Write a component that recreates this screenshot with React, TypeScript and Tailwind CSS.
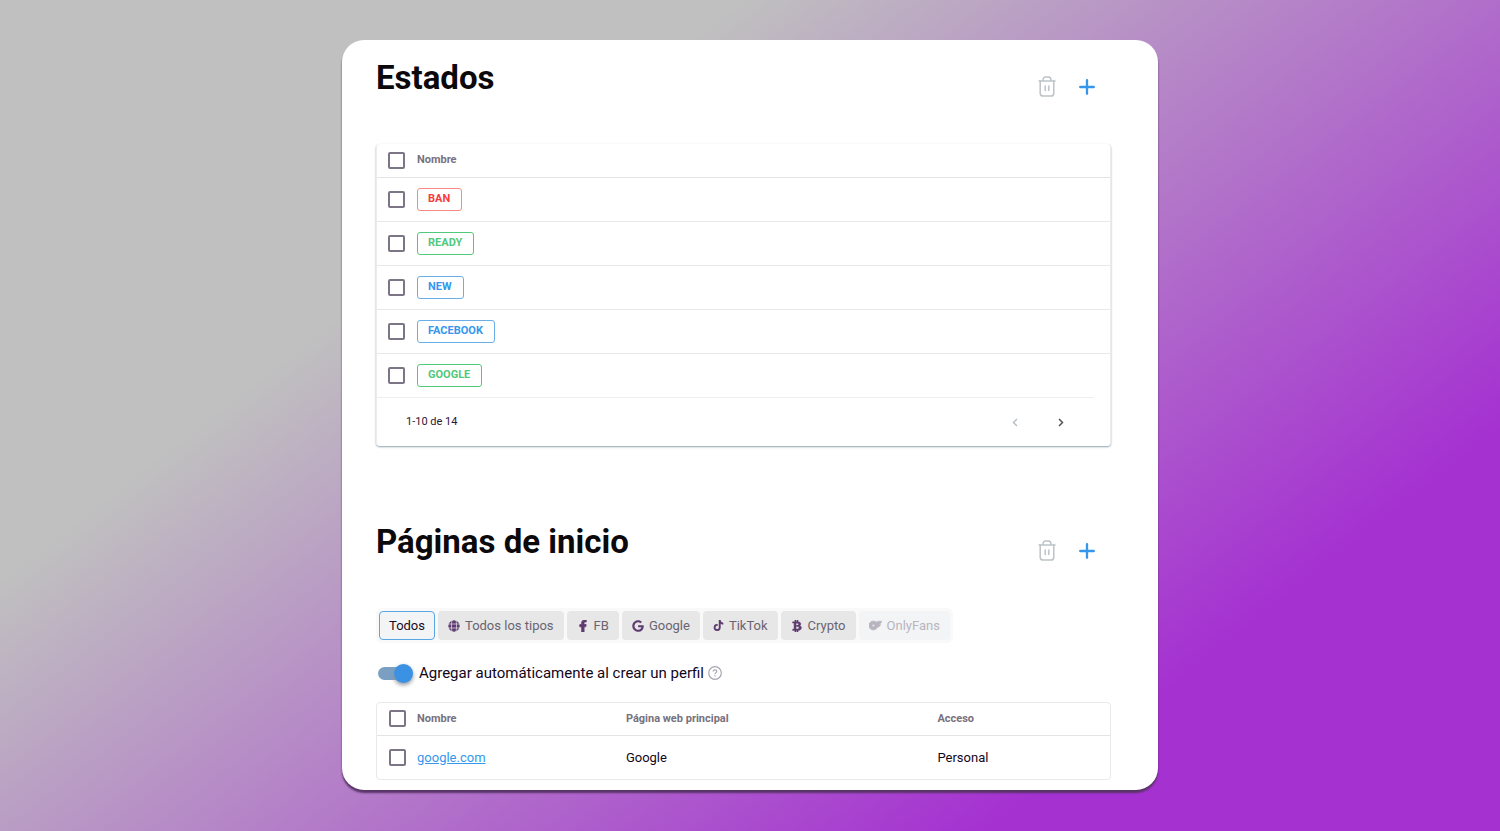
import { useState } from "react";
import type { ReactNode } from "react";
import { FaBtc, FaFacebookF, FaGoogle } from "react-icons/fa";
import { FaTiktok } from "react-icons/fa6";
import { SiOnlyfans } from "react-icons/si";

const statuses = [
  { name: "BAN", style: "border-[#f98a88] text-[#f83c3c]" },
  { name: "READY", style: "border-[#52c87a] text-[#52c87a]" },
  { name: "NEW", style: "border-[#6aaee8] text-[#3597ec]" },
  { name: "FACEBOOK", style: "border-[#6aaee8] text-[#3597ec]" },
  { name: "GOOGLE", style: "border-[#52c87a] text-[#52c87a]" },
];

const filters: { name: string; icon: ReactNode; disabled?: boolean }[] = [
  { name: "Todos", icon: null },
  { name: "Todos los tipos", icon: <GlobeIcon /> },
  { name: "FB", icon: <FaFacebookF size={12} stroke="currentColor" strokeWidth={36} /> },
  { name: "Google", icon: <FaGoogle size={12} /> },
  { name: "TikTok", icon: <FaTiktok size={11} /> },
  { name: "Crypto", icon: <FaBtc size={12} stroke="currentColor" strokeWidth={20} /> },
  { name: "OnlyFans", icon: <SiOnlyfans size={13} stroke="currentColor" strokeWidth={1} />, disabled: true },
];

function GlobeIcon() {
  return (
    <svg width="12" height="12" viewBox="0 0 12 12" fill="none" aria-hidden="true">
      <circle cx="6" cy="6" r="5.700" fill="currentColor" />
      <path d="M4 0C3.300 3 3.300 9 4 12M8 0C8.700 3 8.700 9 8 12M0 4h12M0 8h12" stroke="#e7e7e7" strokeWidth="0.7" />
    </svg>
  );
}

function TrashIcon() {
  return (
    <svg width="18" height="21" viewBox="0 0 18 21" fill="none" stroke="#bdc3c8" strokeWidth="1.500" strokeLinecap="round" aria-hidden="true">
      <path d="M1 5h16" />
      <path d="M5 4.500C5 2.200 6 1 7.600 1h2.800C12 1 13 2.200 13 4.500" />
      <path d="M2.200 5v12.200c0 1.900 1 2.900 2.900 2.900h7.800c1.900 0 2.900-1 2.900-2.900V5" />
      <path d="M7.200 10v4.500M10.800 10v4.500" />
    </svg>
  );
}

function PlusIcon() {
  return (
    <svg width="16" height="16" viewBox="0 0 16 16" fill="none" stroke="#3597ec" strokeWidth="2.300" strokeLinecap="round" aria-hidden="true">
      <path d="M8 1.200v13.600M1.200 8h13.600" />
    </svg>
  );
}

function Chevron({ next }: { next?: boolean }) {
  return (
    <svg width="6" height="9" viewBox="0 0 6 9" fill="none" stroke="currentColor" strokeWidth="1.500" aria-hidden="true">
      <path d={next ? "M1 1l3.500 3.500L1 8" : "M5 1L1.500 4.500 5 8"} />
    </svg>
  );
}

function HelpIcon() {
  return (
    <svg width="14" height="14" viewBox="0 0 14 14" fill="none" stroke="#aaa6b2" strokeWidth="1.200" aria-hidden="true">
      <circle cx="7" cy="7" r="6.300" />
      <path d="M5.200 5.600c0-1.100.8-1.800 1.800-1.800s1.800.7 1.800 1.600C8.800 6.600 7 6.700 7 8.200M7 9.300v1.200" />
    </svg>
  );
}

function Checkbox({ label }: { label: string }) {
  return (
    <input
      type="checkbox"
      aria-label={label}
      className="block size-[17px] appearance-none rounded-xs border-2 border-[#7c7585] bg-white checked:border-[#3597ec] checked:bg-[#3597ec]"
    />
  );
}

function SectionHeader({ title }: { title: string }) {
  return (
    <header className="flex items-start justify-between pr-4">
      <h1 className="text-[33px] leading-10 font-bold text-[#0b090c]">{title}</h1>
      <div className="flex items-center gap-[23px] pt-[18px]">
        <button type="button" aria-label="Eliminar">
          <TrashIcon />
        </button>
        <button type="button" aria-label="Agregar">
          <PlusIcon />
        </button>
      </div>
    </header>
  );
}

export default function App() {
  const [active, setActive] = useState("Todos");

  return (
    <div className="min-h-screen bg-[linear-gradient(142deg,#c0c0c0_29%,#a531d1_80%)] px-4 py-10 font-['Roboto','Liberation_Sans',sans-serif]">
      <main className="mx-auto w-full max-w-[816px] rounded-[22px] bg-white pt-[18px] pr-[47px] pb-[10px] pl-[34px] shadow-[0_3px_2px_#593468]">
        <section>
          <SectionHeader title="Estados" />
          <div className="mt-[46px] rounded border-x border-[#ececec] shadow-[0_1px_2px_#94a3ab]">
            <table className="w-full text-left">
              <thead>
                <tr className="h-[33px] border-b border-[#e4e4e6]">
                  <th className="w-10 pl-[11px]">
                    <Checkbox label="Seleccionar todos los estados" />
                  </th>
                  <th className="text-[11px] font-bold text-[#77717d]">Nombre</th>
                </tr>
              </thead>
              <tbody>
                {statuses.map((status) => (
                  <tr key={status.name} className="h-11 border-b border-[#e8e8ea] last:border-0">
                    <td className="pl-[11px]">
                      <Checkbox label={`Seleccionar ${status.name}`} />
                    </td>
                    <td>
                      <span className={`flex h-[23px] w-fit items-center rounded-[3px] border pr-[11px] pl-[10px] text-[11px] font-bold ${status.style}`}>
                        {status.name}
                      </span>
                    </td>
                  </tr>
                ))}
              </tbody>
            </table>
            <footer className="mr-4 flex h-[49px] items-center justify-between border-t border-[#eeeeee] pr-[30px] pl-[29px] text-[11px] text-[#2c1638]">
              <span>1-10 de 14</span>
              <nav aria-label="Paginación" className="flex gap-10">
                <button type="button" aria-label="Página anterior" disabled className="text-[#b9c0c5]">
                  <Chevron />
                </button>
                <button type="button" aria-label="Página siguiente" className="text-[#55505a]">
                  <Chevron next />
                </button>
              </nav>
            </footer>
          </div>
        </section>

        <section className="mt-[76px]">
          <SectionHeader title="Páginas de inicio" />
          <div className="mt-[46px] flex w-fit flex-wrap gap-[3px] rounded-md bg-[#f9f9fa] p-[3px]">
            {filters.map(({ name, icon, disabled }) => (
              <button
                key={name}
                type="button"
                disabled={disabled}
                aria-pressed={active === name}
                onClick={() => setActive(name)}
                className={`flex h-[29px] items-center gap-[5px] rounded border px-[9px] text-[13px] ${
                  active === name
                    ? "border-[#5aa5e6] bg-[#f3f4f6] text-[#190b22]"
                    : disabled
                      ? "border-transparent bg-[#f2f4f6] text-[#b9b5bf]"
                      : "border-transparent bg-[#e7e7e7] text-[#6a6470]"
                }`}
              >
                {icon && <span className={disabled ? "" : "text-[#5e3b70]"}>{icon}</span>}
                {name}
              </button>
            ))}
          </div>

          <div className="mt-5 flex h-5 items-center">
            <input
              id="auto-add"
              type="checkbox"
              role="switch"
              defaultChecked
              className="ml-[2px] flex h-[13px] w-8 appearance-none items-center rounded-full bg-[#a9a9ad] before:size-[19px] before:shrink-0 before:rounded-full before:bg-[#b9bdc2] before:shadow-[0_2px_4px_#8d939a] checked:justify-end checked:bg-[#7a9fc2] checked:before:-mr-[3px] checked:before:bg-[#3b92e4]"
            />
            <label htmlFor="auto-add" className="ml-[9px] text-[15px] text-[#12061a]">
              Agregar automáticamente al crear un perfil
            </label>
            <button type="button" aria-label="Ayuda" className="ml-1">
              <HelpIcon />
            </button>
          </div>

          <div className="mt-[19px] rounded border border-[#e9e9eb]">
            <table className="w-full table-fixed text-left">
              <thead>
                <tr className="h-8 border-b border-[#e4e4e6] text-[11px] text-[#77717d]">
                  <th className="w-10 pl-3">
                    <Checkbox label="Seleccionar todas las páginas" />
                  </th>
                  <th className="w-[28.5%] font-bold">Nombre</th>
                  <th className="w-[42.5%] font-bold">Página web principal</th>
                  <th className="font-bold">Acceso</th>
                </tr>
              </thead>
              <tbody>
                <tr className="h-11 text-[13px] text-[#12061a]">
                  <td className="pl-3">
                    <Checkbox label="Seleccionar google.com" />
                  </td>
                  <td>
                    <a href="#google" className="text-[#3597ec] underline">
                      google.com
                    </a>
                  </td>
                  <td>Google</td>
                  <td>Personal</td>
                </tr>
              </tbody>
            </table>
          </div>
        </section>
      </main>
    </div>
  );
}
